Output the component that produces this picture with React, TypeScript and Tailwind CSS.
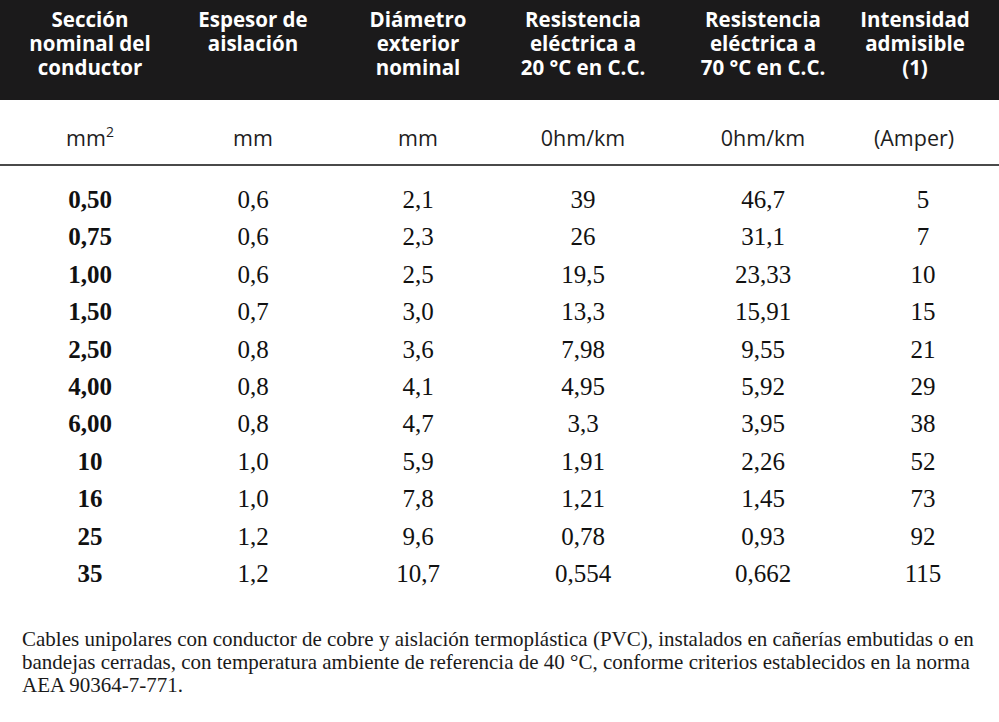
import React from "react";

const rows: string[][] = [
  ["0,50", "0,6", "2,1", "39", "46,7", "5"],
  ["0,75", "0,6", "2,3", "26", "31,1", "7"],
  ["1,00", "0,6", "2,5", "19,5", "23,33", "10"],
  ["1,50", "0,7", "3,0", "13,3", "15,91", "15"],
  ["2,50", "0,8", "3,6", "7,98", "9,55", "21"],
  ["4,00", "0,8", "4,1", "4,95", "5,92", "29"],
  ["6,00", "0,8", "4,7", "3,3", "3,95", "38"],
  ["10", "1,0", "5,9", "1,91", "2,26", "52"],
  ["16", "1,0", "7,8", "1,21", "1,45", "73"],
  ["25", "1,2", "9,6", "0,78", "0,93", "92"],
  ["35", "1,2", "10,7", "0,554", "0,662", "115"],
];

const headers: string[][] = [
  ["Sección", "nominal del", "conductor"],
  ["Espesor de", "aislación"],
  ["Diámetro", "exterior", "nominal"],
  ["Resistencia", "eléctrica a", "20 °C en C.C."],
  ["Resistencia", "eléctrica a", "70 °C en C.C."],
  ["Intensidad", "admisible", "(1)"],
];

const grid = "grid grid-cols-[180px_146px_184px_146px_214px_106px]";
const sans = "font-['Open_Sans',sans-serif]";
const serif = "font-['Liberation_Serif','Times_New_Roman',serif]";

export default function App() {
  return (
    <div className="w-[999px] h-[722px] bg-white overflow-hidden">
      {/* header band */}
      <div className={`${grid} h-[100px] bg-[#1b1a1b] pt-[7px] ${sans}`}>
        {headers.map((lines, i) => (
          <div
            key={i}
            className={`flex justify-center text-center text-white font-bold text-[20.5px] leading-[24px] whitespace-nowrap ${i === 5 ? "pr-[16px]" : ""}`}
          >
            <div>
              {lines.map((l, j) => (
                <div key={j}>{l}</div>
              ))}
            </div>
          </div>
        ))}
      </div>

      {/* units */}
      <div className={`${grid} h-[66px] pt-[26px] border-b-2 border-[#4a4a4a] text-[#1e1e1e] text-[21.5px] leading-[24px] ${sans}`}>
        <div className="flex justify-center">
          <span>
            mm<sup className="text-[14px] -top-[9px]">2</sup>
          </span>
        </div>
        <div className="flex justify-center">mm</div>
        <div className="flex justify-center">mm</div>
        <div className="flex justify-center">0hm/km</div>
        <div className="flex justify-center">0hm/km</div>
        <div className="flex justify-center pr-[18px]">(Amper)</div>
      </div>

      {/* data */}
      <div className={`pt-[15px] ${serif} text-[25px] text-[#111]`}>
        {rows.map((r, i) => (
          <div key={i} className={`${grid} h-[37.4px] leading-[37.4px]`}>
            {r.map((v, j) => (
              <div key={j} className={`flex justify-center whitespace-nowrap ${j === 0 ? "font-bold" : ""}`}>
                {v}
              </div>
            ))}
          </div>
        ))}
      </div>

      {/* note */}
      <p className={`mt-[36px] pl-[22px] ${serif} text-[21px] leading-[23px] text-[#1a1a1a] whitespace-nowrap`}>
        Cables unipolares con conductor de cobre y aislación termoplástica (PVC), instalados en cañerías embutidas o en
        <br />
        bandejas cerradas, con temperatura ambiente de referencia de 40 °C, conforme criterios establecidos en la norma
        <br />
        AEA 90364-7-771.
      </p>
    </div>
  );
}
